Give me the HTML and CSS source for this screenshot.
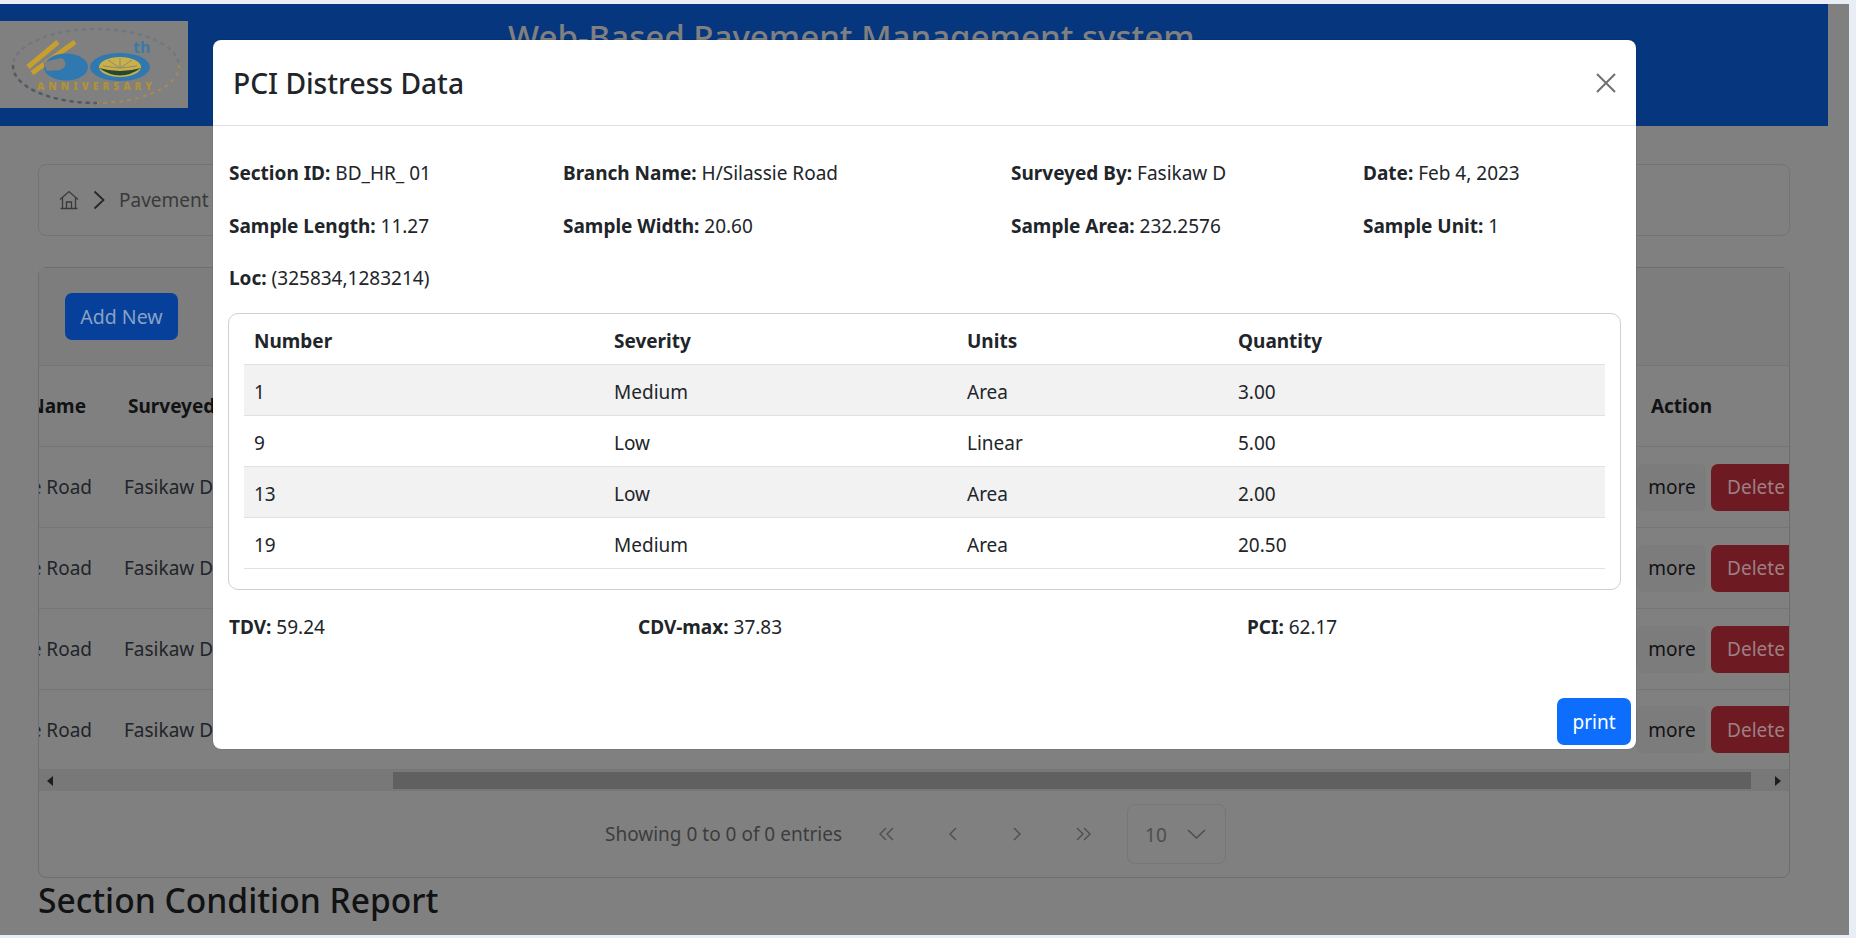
FILE: index.html
```html
<!DOCTYPE html>
<html lang="en">
  <head>
    <meta charset="UTF-8" />
    <title>PCI Distress Data</title>
    <link rel="stylesheet" href="styles.css">
  </head>
  <body>
    <div class="window">
      <header class="topbar">
        <div class="logo">
          <svg width="188" height="87" viewBox="0 0 188 87">
            <ellipse cx="96" cy="45" rx="83" ry="37" fill="none" stroke="#6f7780" stroke-width="2.5" stroke-dasharray="2 6" stroke-linecap="round" />
            <path d="M 96 82 A 83 37 0 0 0 179 45" fill="none" stroke="#a08a5c" stroke-width="2.5" stroke-dasharray="2 6" stroke-linecap="round" />
            <path d="M 13 45 A 83 37 0 0 0 96 82" fill="none" stroke="#55595f" stroke-width="2.5" stroke-dasharray="2 6" stroke-linecap="round" />
            <path d="M 28 46 L 58 21" stroke="#c79f2e" stroke-width="5" />
            <path d="M 32 52 L 75 21" stroke="#c79f2e" stroke-width="5" />
            <ellipse cx="66" cy="46" rx="22" ry="13.5" fill="#2f78b0" />
            <path d="M 43 41 L 62 37 Q 70 44 60 49 L 47 50 Z" fill="#808080" />
            <ellipse cx="120" cy="46" rx="30" ry="14" fill="#2f78b0" />
            <ellipse cx="120" cy="46" rx="21" ry="10" fill="#c9b04a" />
            <path d="M 99 47 Q 120 62 141 47 Q 120 53 99 47 Z" fill="#26482c" />
            <path d="M 120 47 L 120 37 M 120 47 L 108 39 M 120 47 L 132 39 M 120 47 L 103 45 M 120 47 L 137 45" stroke="#8b8a70" stroke-width="1" />
            <text class="logo-th" x="133" y="32">th</text>
            <text class="logo-caption" x="37" y="69" textLength="115">ANNIVERSARY</text>
          </svg>
        </div>
        <h1 class="app-title">Web-Based Pavement Management system</h1>
      </header>

      <main class="page">
        <nav class="crumbs">
          <svg class="crumb-home" width="20" height="20" viewBox="0 0 20 20">
            <path d="M1 9.5 L10 1.5 L19 9.5 M3.5 8 V18.5 H16.5 V8 M7.5 18.5 V12 H12.5 V18.5 M1.5 18.5 H18.5" fill="none" stroke="#3a3a3a" stroke-width="1.3" />
          </svg>
          <svg width="12" height="20" viewBox="0 0 12 20">
            <path d="M1.5 1.5 L10.5 10 L1.5 18.5" fill="none" stroke="#262626" stroke-width="1.8" />
          </svg>
          <span>Pavement condition</span>
        </nav>

        <section class="card">
          <div class="card-head">
            <button class="btn btn-add">Add New</button>
          </div>
          <div class="data-table">
            <div class="data-row data-head">
              <div class="cell-branch">Branch Name</div>
              <div class="cell-by">Surveyed By</div>
              <div class="cell-action">Action</div>
            </div>
            <div class="data-row">
              <div class="cell-branch">H/Silassie Road</div>
              <div class="cell-by">Fasikaw D</div>
              <div class="actions"><button class="btn btn-more">more</button><button class="btn btn-delete">Delete</button></div>
            </div>
            <div class="data-row">
              <div class="cell-branch">H/Silassie Road</div>
              <div class="cell-by">Fasikaw D</div>
              <div class="actions"><button class="btn btn-more">more</button><button class="btn btn-delete">Delete</button></div>
            </div>
            <div class="data-row">
              <div class="cell-branch">H/Silassie Road</div>
              <div class="cell-by">Fasikaw D</div>
              <div class="actions"><button class="btn btn-more">more</button><button class="btn btn-delete">Delete</button></div>
            </div>
            <div class="data-row">
              <div class="cell-branch">H/Silassie Road</div>
              <div class="cell-by">Fasikaw D</div>
              <div class="actions"><button class="btn btn-more">more</button><button class="btn btn-delete">Delete</button></div>
            </div>
          </div>
          <div class="hscroll">
            <svg width="6" height="10" viewBox="0 0 6 10"><path d="M6 0 V10 L0 5 Z" fill="#1d1d1d" /></svg>
            <div class="hscroll-thumb"></div>
            <svg width="6" height="10" viewBox="0 0 6 10"><path d="M0 0 V10 L6 5 Z" fill="#1d1d1d" /></svg>
          </div>
          <div class="pager">
            <span class="pager-info">Showing 0 to 0 of 0 entries</span>
            <svg class="pager-first" width="17" height="14" viewBox="0 0 17 14"><path d="M8 1 L2 7 L8 13 M15 1 L9 7 L15 13" fill="none" stroke="#4e4e4e" stroke-width="1.4" /></svg>
            <svg class="pager-prev" width="9" height="14" viewBox="0 0 9 14"><path d="M8 1 L2 7 L8 13" fill="none" stroke="#4e4e4e" stroke-width="1.4" /></svg>
            <svg class="pager-next" width="9" height="14" viewBox="0 0 9 14"><path d="M1 1 L7 7 L1 13" fill="none" stroke="#4e4e4e" stroke-width="1.4" /></svg>
            <svg class="pager-last" width="17" height="14" viewBox="0 0 17 14"><path d="M2 1 L8 7 L2 13 M9 1 L15 7 L9 13" fill="none" stroke="#4e4e4e" stroke-width="1.4" /></svg>
            <div class="page-size">
              <span class="page-size-value">10</span>
              <svg width="19" height="10" viewBox="0 0 19 10"><path d="M1 1 L9.5 9 L18 1" fill="none" stroke="#4e4e4e" stroke-width="1.6" /></svg>
            </div>
          </div>
        </section>

        <h2 class="report-title">Section Condition Report</h2>
      </main>

      <div class="modal">
        <div class="modal-head">
          <h3 class="modal-title">PCI Distress Data</h3>
          <svg width="20" height="20" viewBox="0 0 20 20"><path d="M1 1 L19 19 M19 1 L1 19" stroke="#6f6f6f" stroke-width="2" /></svg>
        </div>
        <div class="info-grid">
          <div><b>Section ID:</b> BD_HR_ 01</div>
          <div><b>Branch Name:</b> H/Silassie Road</div>
          <div><b>Surveyed By:</b> Fasikaw D</div>
          <div><b>Date:</b> Feb 4, 2023</div>
          <div><b>Sample Length:</b> 11.27</div>
          <div><b>Sample Width:</b> 20.60</div>
          <div><b>Sample Area:</b> 232.2576</div>
          <div><b>Sample Unit:</b> 1</div>
          <div><b>Loc:</b> (325834,1283214)</div>
        </div>
        <div class="distress-card">
          <table class="distress">
            <thead>
              <tr><th class="col-num">Number</th><th class="col-sev">Severity</th><th class="col-unit">Units</th><th>Quantity</th></tr>
            </thead>
            <tbody>
              <tr><td>1</td><td>Medium</td><td>Area</td><td>3.00</td></tr>
              <tr><td>9</td><td>Low</td><td>Linear</td><td>5.00</td></tr>
              <tr><td>13</td><td>Low</td><td>Area</td><td>2.00</td></tr>
              <tr><td>19</td><td>Medium</td><td>Area</td><td>20.50</td></tr>
            </tbody>
          </table>
        </div>
        <div class="stats">
          <div><b>TDV:</b> 59.24</div>
          <div><b>CDV-max:</b> 37.83</div>
          <div><b>PCI:</b> 62.17</div>
        </div>
        <button class="btn btn-print">print</button>
      </div>
    </div>
  </body>
</html>
```

FILE: styles.css
```css
* {
  box-sizing: border-box;
}

body {
  margin: 0;
  background-color: #e8edf6;
  font-family: "Noto Sans", "Open Sans", sans-serif;
  font-size: 19px;
  color: #212529;
  overflow: hidden;
}

.window {
  position: relative;
  width: 1849px;
  height: 931px;
  margin-top: 4px;
  background-color: #808080;
  overflow: hidden;
}

/* top bar */
.topbar {
  display: flex;
  width: 1828px;
  height: 122px;
  padding-top: 17px;
  background-color: #06367e;
}

.logo {
  flex: none;
  width: 188px;
  height: 87px;
  background-color: #808080;
}

.logo-th {
  font-size: 16px;
  font-weight: 700;
  fill: #3c7aa8;
}

.logo-caption {
  font-size: 10px;
  font-weight: 900;
  fill: #b0923a;
}

.app-title {
  margin: -2px 0 0 320px;
  font-size: 33.1px;
  font-weight: 500;
  line-height: 36px;
  color: #808080;
  white-space: nowrap;
}

/* page behind the modal */
.page {
  width: 1828px;
  padding: 38px 38px 0;
}

.crumbs {
  display: flex;
  align-items: center;
  gap: 14px;
  height: 72px;
  padding-left: 20px;
  border: 1px solid #747475;
  border-radius: 8px;
  color: #3a3a3a;
}

.card {
  height: 611px;
  margin-top: 31px;
  border: 1px solid #6e6e6f;
  border-radius: 8px;
}

.card-head {
  height: 98px;
  padding: 25px 26px;
  background-color: #7d7d7e;
  border-bottom: 1px solid #757576;
}

.btn {
  border: none;
  border-radius: 7px;
  font-family: inherit;
  font-size: 19px;
  white-space: nowrap;
}

.btn-add {
  width: 113px;
  height: 47px;
  background-color: #06409a;
  color: #8aa2c4;
  font-size: 19.5px;
}

.data-row {
  display: flex;
  align-items: center;
  height: 81px;
  border-bottom: 1px solid #757575;
  overflow: hidden;
}

.data-row:last-child {
  height: 80px;
}

.data-head {
  font-weight: 700;
  color: #111213;
}

.cell-branch {
  display: flex;
  justify-content: flex-end;
  flex: none;
  width: 53px;
  overflow: hidden;
  white-space: nowrap;
}

.data-head .cell-branch {
  width: 47px;
}

.cell-by {
  flex: none;
  margin-left: 32px;
  white-space: nowrap;
}

.data-head .cell-by {
  margin-left: 42px;
}

.cell-action {
  margin-left: auto;
  margin-right: 77px;
}

.actions {
  display: flex;
  flex: none;
  gap: 5px;
  width: 153px;
  margin-left: auto;
  overflow: hidden;
}

.btn-more {
  flex: none;
  width: 70px;
  height: 47px;
  padding: 0 0 0 2px;
  background-color: #7c7c7d;
  color: #111213;
}

.btn-delete {
  flex: none;
  width: 90px;
  height: 47px;
  padding: 0;
  background-color: #6e1a22;
  color: #9c8083;
}

.hscroll {
  display: flex;
  align-items: center;
  justify-content: space-between;
  height: 21px;
  padding: 0 8px;
  background-color: #787878;
}

.hscroll-thumb {
  flex: none;
  width: 1358px;
  height: 17px;
  margin-left: 336px;
  margin-right: 21px;
  background-color: #606060;
}

.pager {
  display: flex;
  align-items: center;
  height: 101px;
  padding-left: 566px;
  padding-bottom: 16px;
  color: #3d3d3d;
}

.pager-first {
  margin-left: 36px;
}

.pager-prev {
  margin-left: 53px;
}

.pager-next {
  margin-left: 56px;
}

.pager-last {
  margin-left: 53px;
}

.page-size {
  display: flex;
  align-items: center;
  gap: 20px;
  width: 99px;
  height: 60px;
  margin-left: 35px;
  padding-left: 17px;
  border: 1px solid #767677;
  border-radius: 8px;
  color: #4e4e4e;
}

.page-size-value {
  padding-top: 3px;
}

.report-title {
  margin: 0;
  font-size: 33.6px;
  font-weight: 500;
  line-height: 44px;
  color: #111213;
  white-space: nowrap;
}

/* modal */
.modal {
  position: absolute;
  left: 213px;
  top: 36px;
  display: flex;
  flex-direction: column;
  width: 1423px;
  height: 709px;
  background-color: #fff;
  border-radius: 8px;
  box-shadow: 0 0 1px rgba(0, 0, 0, 0.6);
}

.modal-head {
  display: flex;
  flex: none;
  align-items: center;
  justify-content: space-between;
  height: 86px;
  padding: 0 20px;
  border-bottom: 1px solid #dee2e6;
}

.modal-title {
  margin: 0;
  font-size: 28.2px;
  font-weight: 500;
}

.info-grid {
  display: grid;
  grid-template-columns: 334px 448px 352px 1fr;
  grid-template-rows: 53px 54px 50px;
  align-items: center;
  margin-top: 20px;
  padding-left: 16px;
}

.distress-card {
  height: 277px;
  margin: 10px 15px 0;
  padding: 0 15px;
  border: 1px solid #d0d0d0;
  border-radius: 10px;
}

.distress {
  width: 100%;
  table-layout: fixed;
  border-collapse: separate;
  border-spacing: 0;
}

.distress th,
.distress td {
  padding: 3px 10px 0;
  text-align: left;
  border-bottom: 1px solid #dee2e6;
}

.distress th {
  height: 51px;
  font-weight: 700;
}

.distress td {
  height: 51px;
}

.distress tbody tr:nth-child(odd) td {
  background-color: #f2f2f2;
}

.col-num {
  width: 360px;
}

.col-sev {
  width: 353px;
}

.col-unit {
  width: 271px;
}

.stats {
  display: grid;
  grid-template-columns: 409px 609px 1fr;
  align-items: center;
  height: 40px;
  margin-top: 17px;
  padding-left: 16px;
}

.btn-print {
  align-self: flex-end;
  width: 74px;
  height: 47px;
  margin: auto 5px 4px 0;
  padding: 0;
  background-color: #0d6efd;
  color: #fff;
}
```
